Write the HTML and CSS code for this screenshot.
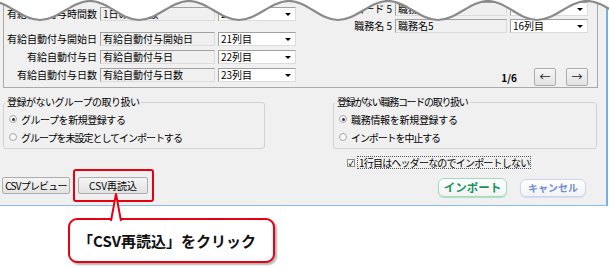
FILE: index.html
```html
<!DOCTYPE html>
<html lang="ja">
<head>
    <meta charset="UTF-8">
    <meta name="viewport" content="width=device-width, initial-scale=1.0">
    <title>CSVインポート</title>
    <link rel="stylesheet" href="styles.css">
</head>
<body>
    <div class="window">
        <div class="panel">
            <div class="col-left">
                <div class="row row-first">
                    <span class="lbl">有給自動付与時間数</span>
                    <span class="field">1日の時間数</span>
                    <span class="select">20列目</span>
                </div>
                <div class="row">
                    <span class="lbl">有給自動付与開始日</span>
                    <span class="field">有給自動付与開始日</span>
                    <span class="select">21列目</span>
                </div>
                <div class="row">
                    <span class="lbl">有給自動付与日</span>
                    <span class="field">有給自動付与日</span>
                    <span class="select">22列目</span>
                </div>
                <div class="row">
                    <span class="lbl">有給自動付与日数</span>
                    <span class="field">有給自動付与日数</span>
                    <span class="select">23列目</span>
                </div>
            </div>
            <div class="col-right">
                <div class="row">
                    <span class="lbl">職務コード 5</span>
                    <span class="field">職務コード5</span>
                    <span class="select">15列目</span>
                </div>
                <div class="row">
                    <span class="lbl">職務名 5</span>
                    <span class="field">職務名5</span>
                    <span class="select">16列目</span>
                </div>
                <div class="pager">
                    <span class="page-no">1/6</span>
                    <span class="btn nav-btn">←</span>
                    <span class="btn nav-btn">→</span>
                </div>
            </div>
        </div>

        <div class="groups">
            <fieldset class="group group-left">
                <legend>登録がないグループの取り扱い</legend>
                <div class="opt"><span class="radio on"></span><span class="t1">グループを新規登録する</span></div>
                <div class="opt"><span class="radio"></span><span class="t2">グループを未設定としてインポートする</span></div>
            </fieldset>
            <fieldset class="group group-right">
                <legend class="t3">登録がない職務コードの取り扱い</legend>
                <div class="opt"><span class="radio on"></span><span class="t4">職務情報を新規登録する</span></div>
                <div class="opt"><span class="radio"></span><span class="t5">インポートを中止する</span></div>
            </fieldset>
        </div>

        <div class="check-row">
            <span class="checkbox">✓</span>
            <span class="check-label">1行目はヘッダーなのでインポートしない</span>
        </div>

        <div class="footer">
            <span class="btn btn-preview">CSVプレビュー</span>
            <span class="hl"><span class="btn btn-reload">CSV再読込</span></span>
            <span class="btn-import">インポート</span>
            <span class="btn-cancel">キャンセル</span>
        </div>
    </div>

    <div class="callout">
        <svg class="pointer" width="14" height="28" viewBox="0 0 14 28">
            <path d="M2 28 L7 1 L12 28" fill="#fff" stroke="#e60012" stroke-width="2" stroke-linejoin="round"/>
        </svg>
        「CSV再読込」をクリック
    </div>

    <svg class="wave" width="609" height="26" viewBox="0 0 609 26">
        <path d="M-10,1 C8,1 22,20 40,20 S72,1 90,1 S121,20 139,20 S171,1 189,1 S221,20 239,20 S271,1 289,1 S320,20 338,20 S370,1 388,1 S420,20 438,20 S470,1 488,1 S519,20 537,20 S569,1 587,1 S619,20 637,20 L637,-2 L-10,-2 Z" fill="#fff"/>
        <path d="M-10,1 C8,1 22,20 40,20 S72,1 90,1 S121,20 139,20 S171,1 189,1 S221,20 239,20 S271,1 289,1 S320,20 338,20 S370,1 388,1 S420,20 438,20 S470,1 488,1 S519,20 537,20 S569,1 587,1 S619,20 637,20" fill="none" stroke="#8a8a8a" stroke-width="2.2"/>
    </svg>
</body>
</html>
```

FILE: styles.css
```css
* { box-sizing: border-box; }

body {
    margin: 0;
    width: 609px;
    height: 268px;
    overflow: hidden;
    position: relative;
    background: #fff;
    font-family: "Noto Sans CJK JP", sans-serif;
    font-size: 10px;
    color: #000;
}

/* ウィンドウ本体 */
.window {
    width: 608px;
    height: 206px;
    background: #f0f0f0;
    border-right: 2px solid #7aaee0;
    border-bottom: 1px solid #8bbbe6;
}

/* 列の割り当て */
.panel {
    display: flex;
    margin-left: 3px;
    width: 595px;
    height: 88px;
    border: 1px solid #a9a9a9;
    border-top: none;
}
.col-left {
    width: 293px;
    padding-top: 7px;
    display: flex;
    flex-direction: column;
    gap: 4px;
}
.col-left .row { grid-template-columns: 93px 115px 78px; }
.row-first { margin-bottom: 7px; }

.col-right {
    width: 288px;
    margin-left: 3px;
    padding-top: 2px;
    display: flex;
    flex-direction: column;
    gap: 3px;
}
.col-right .row { grid-template-columns: 92px 112px 78px; }

.row {
    display: grid;
    column-gap: 3px;
    height: 14px;
    align-items: center;
}
.lbl {
    text-align: right;
    white-space: nowrap;
    line-height: 14px;
}
.field, .select {
    height: 14px;
    border: 1px solid;
    border-color: #a0a0a0 #dcdcdc #dcdcdc #a0a0a0;
    padding-left: 2px;
    line-height: 12px;
    white-space: nowrap;
    overflow: hidden;
}
.field { background: #f0f0f0; }
.select {
    position: relative;
    background: #fff;
}
.select::after {
    content: "";
    position: absolute;
    right: 4px;
    top: 5px;
    border-left: 3px solid transparent;
    border-right: 3px solid transparent;
    border-top: 3px solid #000;
}

.pager {
    margin-top: 32px;
    height: 18px;
    display: flex;
    align-items: center;
    justify-content: flex-end;
    gap: 10px;
}
.page-no {
    font-weight: bold;
    margin-right: 7px;
}

/* ボタン */
.btn {
    display: inline-block;
    height: 17px;
    border: 1px solid #adadad;
    border-radius: 2px;
    background: linear-gradient(#f5f5f5, #e2e2e2);
    text-align: center;
    line-height: 15px;
    white-space: nowrap;
}
.nav-btn {
    width: 22px;
    height: 18px;
    line-height: 15px;
    font-size: 11px;
    color: #222;
}

/* グループボックス */
.groups {
    display: flex;
    gap: 68px;
    margin-top: 7px;
    padding-left: 3px;
}
.group {
    margin: 0;
    padding: 0 0 2px 0;
    border: 1px solid #d3d3d3;
    border-radius: 3px;
    min-width: 0;
}
.group-left { width: 262px; }
.group-right { width: 264px; }
.group legend {
    margin-left: 1px;
    padding: 0 2px;
    line-height: 14px;
    letter-spacing: -0.5px;
    white-space: nowrap;
}
.opt {
    display: flex;
    align-items: center;
    gap: 4px;
    height: 18px;
    padding-left: 5px;
    white-space: nowrap;
}
.opt:first-of-type { margin-top: 1px; }
.radio {
    position: relative;
    width: 8px;
    height: 8px;
    border-radius: 50%;
    border: 1px solid #a8a8a8;
    background: #f8f8f8;
}
.radio.on::after {
    content: "";
    position: absolute;
    left: 1.5px;
    top: 1.5px;
    width: 3px;
    height: 3px;
    border-radius: 50%;
    background: #333;
}
.t1 { letter-spacing: -0.45px; }
.t2 { letter-spacing: -1px; }
.group legend.t3 { letter-spacing: -1.3px; }
.t4 { letter-spacing: -0.3px; }
.t5 { letter-spacing: -1.1px; }

/* チェックボックス */
.check-row {
    display: flex;
    align-items: center;
    gap: 2px;
    height: 13px;
    margin: 7px 0 0 347px;
}
.checkbox {
    width: 8px;
    height: 8px;
    border: 1px solid #8e8e8e;
    background: #fff;
    font-size: 7px;
    line-height: 6px;
    text-align: center;
    font-weight: bold;
}
.check-label {
    border: 1px dotted #555;
    padding: 0 1px;
    line-height: 11px;
    letter-spacing: -0.8px;
    white-space: nowrap;
}

/* 下部ボタン */
.footer {
    display: flex;
    align-items: flex-start;
    margin-top: 8px;
    padding-left: 2px;
}
.btn-preview {
    width: 68px;
    letter-spacing: -0.8px;
}
.hl {
    position: relative;
    margin-left: 8px;
}
.hl::after {
    content: "";
    position: absolute;
    left: -5px;
    right: -6px;
    top: -8px;
    bottom: -8px;
    border: 2px solid #e60012;
    border-radius: 3px;
}
.btn-reload { width: 70px; }

.btn-import, .btn-cancel {
    border-radius: 6px;
    background: linear-gradient(#fff, #f2f2f2);
    text-align: center;
    font-weight: bold;
    white-space: nowrap;
}
.btn-import {
    margin-left: auto;
    margin-top: 1px;
    width: 69px;
    height: 19px;
    border: 1.5px solid #9fdcc0;
    box-shadow: 0 1px 1px #b6d9c8;
    color: #14955a;
    font-size: 11.5px;
    line-height: 16px;
}
.btn-cancel {
    margin: 2px 20px 0 13px;
    width: 66px;
    height: 18px;
    border: 1.5px solid #cbd6ee;
    box-shadow: 0 1px 1px #d4dcec;
    color: #6f8dd4;
    font-size: 10px;
    line-height: 15px;
}

/* 吹き出し */
.callout {
    position: relative;
    margin: 12px 0 0 68px;
    width: 207px;
    height: 45px;
    border: 2px solid #e60012;
    border-radius: 9px;
    background: #fff;
    box-shadow: 2px 2px 2px rgba(0, 0, 0, 0.3);
    display: flex;
    align-items: center;
    padding-left: 8px;
    font-size: 15px;
    font-weight: bold;
    color: #111;
    white-space: nowrap;
}
.pointer {
    position: absolute;
    left: 39px;
    top: -27px;
}

/* 切り取り線 */
.wave {
    position: absolute;
    left: 0;
    top: 0;
}
```
